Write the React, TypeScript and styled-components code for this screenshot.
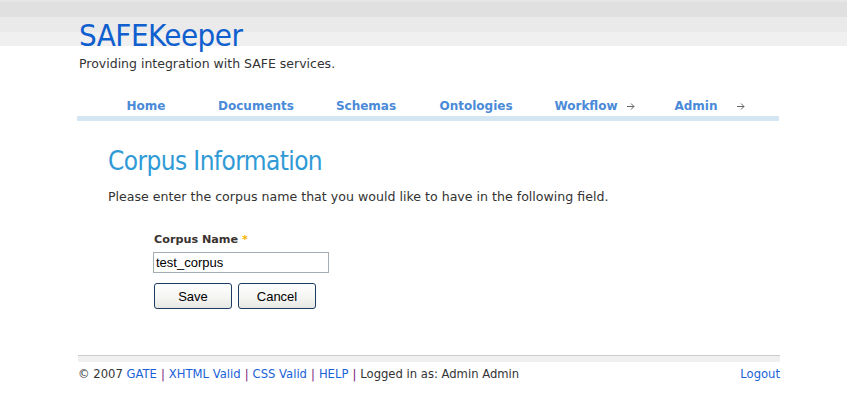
import React from "react";
import styled, { createGlobalStyle } from "styled-components";

const Global = createGlobalStyle`
  html, body { margin: 0; padding: 0; background: #fff; }
  body { font-family: "DejaVu Sans", Verdana, sans-serif; color: #333; }
`;

const Page = styled.div`
  width: 847px;
  min-height: 417px;
  background: linear-gradient(
    to bottom,
    #e6e6e6 0px, #e6e6e6 2px,
    #e0e0e0 2px, #e0e0e0 17px,
    #eaeaea 17px, #eaeaea 32px,
    #f0f0f0 32px, #f0f0f0 46px,
    #ffffff 46px
  ) no-repeat;
`;

const Wrap = styled.div`
  width: 702px;
  margin-left: 77px;
  padding-top: 17px;
`;

const Logo = styled.h1`
  margin: 0 0 0 2px;
  font-family: "DejaVu Sans Condensed", "DejaVu Sans", sans-serif;
  font-weight: normal;
  font-size: 31px;
  line-height: 36px;
  color: #0f5fcf;
  letter-spacing: -0.5px;
`;

const Tagline = styled.p`
  margin: 3px 0 0 2px;
  font-size: 12.5px;
  line-height: 16px;
  color: #333;
`;

const Nav = styled.ul`
  box-sizing: border-box;
  list-style: none;
  margin: 21px 0 0 0;
  padding: 0 0 0 14px;
  display: flex;
  height: 28px;
  border-bottom: 5px solid #d5e6f3;
`;

const NavItem = styled.li`
  position: relative;
  width: 110px;
  padding-top: 5px;
  text-align: center;
  font-size: 12px;
  font-weight: bold;
  line-height: 17px;
  color: #4a8ad8;
`;

const Arrow = styled.svg`
  position: absolute;
  right: 6px;
  top: 10px;
`;

const Content = styled.div`
  padding: 23px 0 0 31px;
`;

const Heading = styled.h2`
  margin: 0;
  font-family: "DejaVu Sans Condensed", "DejaVu Sans", sans-serif;
  font-weight: normal;
  font-size: 26px;
  line-height: 34px;
  color: #2f9ad6;
  letter-spacing: -0.6px;
`;

const Intro = styled.p`
  margin: 10px 0 0 0;
  font-size: 12.6px;
  line-height: 18px;
  color: #333;
`;

const Form = styled.form`
  margin: 27px 0 0 46px;
  display: flex;
  flex-direction: column;
  align-items: flex-start;
`;

const Label = styled.label`
  font-size: 11.2px;
  font-weight: bold;
  color: #3a3330;
  line-height: 14px;
`;

const Req = styled.span`
  color: #f3b300;
  margin-left: 4px;
`;

const Input = styled.input`
  box-sizing: border-box;
  margin-top: 5px;
  margin-left: -1px;
  width: 176px;
  height: 21px;
  border: 1px solid #a5acb2;
  padding: 0 2px;
  font-family: "Liberation Sans", Arial, sans-serif;
  font-size: 13px;
  color: #000;
  outline: none;
`;

const Buttons = styled.div`
  display: flex;
  gap: 6px;
  margin-top: 10px;
`;

const Button = styled.button`
  box-sizing: border-box;
  width: 78px;
  height: 26px;
  border: 1px solid #1c3c64;
  border-radius: 3px;
  background: linear-gradient(to bottom, #ffffff 0%, #f4f4f2 60%, #e6e6e2 100%);
  font-family: "Liberation Sans", Arial, sans-serif;
  font-size: 13px;
  color: #000;
  padding: 0;
`;

const Footer = styled.div`
  margin: 46px -1px 0 1px;
  border-top: 1px solid #cccccc;
  padding-top: 7px;
  background: linear-gradient(to bottom, #f0f0f0 0, #f0f0f0 6px, #fff 6px) no-repeat;
  display: flex;
  justify-content: space-between;
  font-size: 11.6px;
  line-height: 22px;
  color: #333;
`;

const FLink = styled.a`
  color: #1a62d8;
  text-decoration: none;
`;

const Pipe = styled.span`
  color: #7a1a7a;
  margin: 0 4px;
`;

const nav = [
  { label: "Home" },
  { label: "Documents" },
  { label: "Schemas" },
  { label: "Ontologies" },
  { label: "Workflow", sub: true },
  { label: "Admin", sub: true },
];

const ArrowIcon = () => (
  <Arrow width="8" height="7" viewBox="0 0 8 7">
    <path d="M0 3.5H7M4 0.5L7 3.5L4 6.5" stroke="#666" strokeWidth="1" fill="none" />
  </Arrow>
);

export default function App() {
  return (
    <>
      <Global />
      <Page>
        <Wrap>
          <Logo>SAFEKeeper</Logo>
          <Tagline>Providing integration with SAFE services.</Tagline>
          <Nav>
            {nav.map((n) => (
              <NavItem key={n.label}>
                {n.label}
                {n.sub && <ArrowIcon />}
              </NavItem>
            ))}
          </Nav>
          <Content>
            <Heading>Corpus Information</Heading>
            <Intro>Please enter the corpus name that you would like to have in the following field.</Intro>
            <Form onSubmit={(e) => e.preventDefault()}>
              <Label>
                Corpus Name<Req>*</Req>
              </Label>
              <Input defaultValue="test_corpus" />
              <Buttons>
                <Button type="button">Save</Button>
                <Button type="button">Cancel</Button>
              </Buttons>
            </Form>
          </Content>
          <Footer>
            <span>
              © 2007 <FLink>GATE</FLink>
              <Pipe>|</Pipe>
              <FLink>XHTML Valid</FLink>
              <Pipe>|</Pipe>
              <FLink>CSS Valid</FLink>
              <Pipe>|</Pipe>
              <FLink>HELP</FLink>
              <Pipe>|</Pipe>Logged in as: Admin Admin
            </span>
            <FLink>Logout</FLink>
          </Footer>
        </Wrap>
      </Page>
    </>
  );
}
